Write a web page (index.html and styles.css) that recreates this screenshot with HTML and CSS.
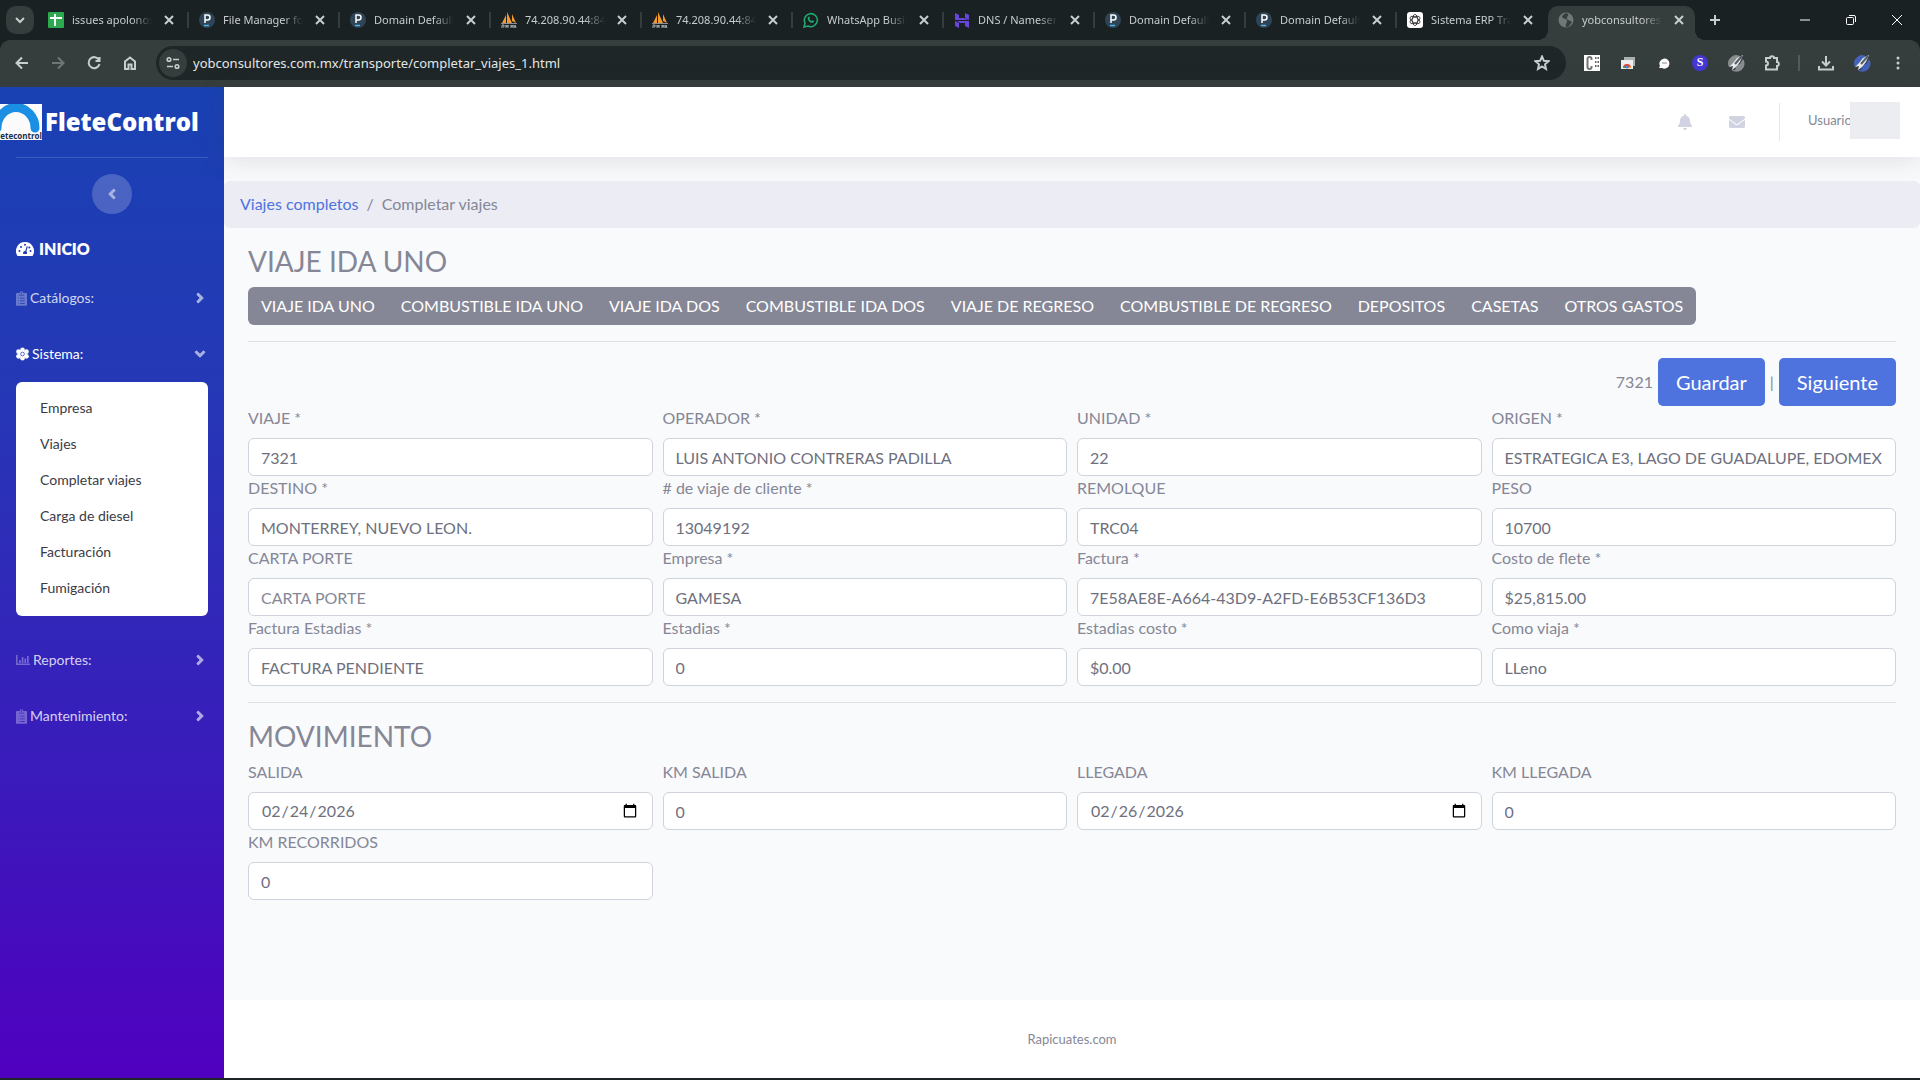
FILE: index.html
```
<!DOCTYPE html>
<html lang="es">

<head>
    <meta charset="UTF-8">
    <meta name="viewport" content="width=device-width, initial-scale=1.0">
    <title>Completar viajes</title>
    <link rel="stylesheet" href="styles.css">
</head>

<body>
    <!-- Shared icons -->
    <svg class="sprite" aria-hidden="true">
        <symbol id="i-close" viewBox="0 0 16 16"><path d="M4 4l8 8M12 4l-8 8" stroke="currentColor" stroke-width="2" fill="none"/></symbol>
        <symbol id="i-plesk" viewBox="0 0 16 16"><circle cx="8" cy="8" r="8" fill="#2f4456"/><path d="M6 11V3h2.500a2.300 2.300 0 0 1 0 5H6" fill="none" stroke="#fff" stroke-width="1.500"/><path d="M5 13.500h5" stroke="#4cb8ee" stroke-width="1.400"/></symbol>
        <symbol id="i-pma" viewBox="0 0 16 16"><path d="M1 11L5 3v8zM6 11V0l5 11zM11 9V2l4 9z" fill="#f29a2e"/><path d="M0 11h16v1H0z" fill="#8d8f94"/><path d="M1 16v-3h2v2H2M5 16v-3l1 2 1-2v3M10 16v-3l1 2 1-2v3M13 16l1-3 1 3" fill="none" stroke="#a9adb3"/></symbol>
        <symbol id="i-angle" viewBox="0 0 256 512"><path fill="currentColor" stroke="currentColor" stroke-width="16" d="M224.3 273l-136 136c-9.400 9.400-24.600 9.400-33.900 0l-22.600-22.600c-9.400-9.400-9.400-24.600 0-33.900l96.400-96.400-96.400-96.400c-9.400-9.400-9.400-24.600 0-33.900L54.300 103c9.400-9.400 24.600-9.400 33.900 0l136 136c9.500 9.400 9.500 24.600.1 34z"/></symbol>
        <symbol id="i-clipboard" viewBox="0 0 12 16"><path fill="currentColor" fill-rule="evenodd" d="M1 2H4a2 2 0 0 1 4 0h3a1 1 0 0 1 1 1v12a1 1 0 0 1-1 1H1a1 1 0 0 1-1-1V3a1 1 0 0 1 1-1zM6 1.200a.8.8 0 1 0 0 1.600.8.8 0 0 0 0-1.600zM3 4v.6h6V4zM2.500 7.200v.7h.7v-.7zm2 0v.7h5v-.7zm-2 3v.7h.7v-.7zm2 0v.7h5v-.7zm-2 3v.7h.7v-.7zm2 0v.7h5v-.7z"/></symbol>
        <symbol id="i-rocket" viewBox="0 0 18 18"><path d="M14 3A8 8 0 0 0 2 13l6-5zM4 15.500A8 8 0 0 0 16 5l-3 5-3 1-2 5z" fill="currentColor" opacity=".75"/><path d="M16 1l-6 3-4 5-4 4 4-1-1 4 4-3 4-5z" fill="#e6eaf0"/><path d="M15 2L8 10" stroke="#555e66" fill="none"/></symbol>
    </svg>

    <!-- Browser bar -->
    <header class="browser">
        <div class="tab-strip">
            <button class="tab-search" aria-label="Buscar pestañas"><svg viewBox="0 0 16 16" width="16" height="16"><path d="M4 6l4 4 4-4" fill="none" stroke="currentColor" stroke-width="2"/></svg></button>
            <div class="tab"><svg class="favicon" viewBox="0 0 16 16"><rect width="16" height="16" rx="1" fill="#2da94f"/><path d="M7 2v12M2 6h12" stroke="#fff" stroke-width="2"/></svg><span class="tab-title">issues apolonos</span><button class="tab-close" aria-label="Cerrar"><svg><use href="#i-close"/></svg></button></div>
            <div class="tab"><svg class="favicon"><use href="#i-plesk"/></svg><span class="tab-title">File Manager for</span><button class="tab-close" aria-label="Cerrar"><svg><use href="#i-close"/></svg></button></div>
            <div class="tab"><svg class="favicon"><use href="#i-plesk"/></svg><span class="tab-title">Domain Default</span><button class="tab-close" aria-label="Cerrar"><svg><use href="#i-close"/></svg></button></div>
            <div class="tab"><svg class="favicon"><use href="#i-pma"/></svg><span class="tab-title">74.208.90.44:844</span><button class="tab-close" aria-label="Cerrar"><svg><use href="#i-close"/></svg></button></div>
            <div class="tab"><svg class="favicon"><use href="#i-pma"/></svg><span class="tab-title">74.208.90.44:844</span><button class="tab-close" aria-label="Cerrar"><svg><use href="#i-close"/></svg></button></div>
            <div class="tab"><svg class="favicon" viewBox="0 0 16 16"><path d="M1 15l1-4a6.500 6.500 0 1 1 3 3z" fill="none" stroke="#1fa870" stroke-width="1.600"/><path d="M5 5c1-1 1.500-.5 2 1l-.6 1c.5 1 1.200 1.600 2.200 2l1-.8c1.500.5 2 1 1 2C8 12.500 3.500 8 5 5z" fill="#1fa870"/></svg><span class="tab-title">WhatsApp Busin</span><button class="tab-close" aria-label="Cerrar"><svg><use href="#i-close"/></svg></button></div>
            <div class="tab"><svg class="favicon" viewBox="0 0 16 16"><path d="M1 1l4 2v3h5l4 2H1zM11 1l4 2v5l-4-2zM15 13V9H3l3 2h5v3l4 2zM1 9l4 2v5l-4-2z" fill="#6747d9"/></svg><span class="tab-title">DNS / Nameserv</span><button class="tab-close" aria-label="Cerrar"><svg><use href="#i-close"/></svg></button></div>
            <div class="tab"><svg class="favicon"><use href="#i-plesk"/></svg><span class="tab-title">Domain Default</span><button class="tab-close" aria-label="Cerrar"><svg><use href="#i-close"/></svg></button></div>
            <div class="tab"><svg class="favicon"><use href="#i-plesk"/></svg><span class="tab-title">Domain Default</span><button class="tab-close" aria-label="Cerrar"><svg><use href="#i-close"/></svg></button></div>
            <div class="tab tab-last"><svg class="favicon" viewBox="0 0 16 16"><rect width="16" height="16" rx="3" fill="#fff"/><g fill="none" stroke="#222" stroke-width=".8"><ellipse cx="8" cy="8" rx="2.800" ry="5.500"/><ellipse cx="8" cy="8" rx="2.800" ry="5.500" transform="rotate(60 8 8)"/><ellipse cx="8" cy="8" rx="2.800" ry="5.500" transform="rotate(120 8 8)"/></g></svg><span class="tab-title">Sistema ERP Tran</span><button class="tab-close" aria-label="Cerrar"><svg><use href="#i-close"/></svg></button></div>
            <div class="tab tab-active"><svg class="favicon" viewBox="0 0 16 16"><circle cx="8" cy="8" r="7.500" fill="#6f7778"/><path d="M8 1c-3 2-5 3-3 5s4 0 4 3-2 3-1 6c4 0 4-3 6-5-2-2-4-1-5-3s2-3 1-5z" fill="#363d3d"/></svg><span class="tab-title">yobconsultores.c</span><button class="tab-close" aria-label="Cerrar"><svg><use href="#i-close"/></svg></button></div>
            <button class="tab-new" aria-label="Nueva pestaña"><svg viewBox="0 0 16 16" width="16" height="16"><path d="M8 3v10M3 8h10" stroke="currentColor" stroke-width="2"/></svg></button>
            <div class="window-buttons">
                <button aria-label="Minimizar"><svg viewBox="0 0 12 12" width="12" height="12"><path d="M1 6h10" stroke="currentColor"/></svg></button>
                <button aria-label="Restaurar"><svg viewBox="0 0 12 12" width="12" height="12" fill="none" stroke="currentColor"><rect x="1.500" y="3.500" width="7" height="7" rx="1"/><path d="M4 1.500h5a1.500 1.500 0 0 1 1.500 1.500v5"/></svg></button>
                <button aria-label="Cerrar ventana"><svg viewBox="0 0 12 12" width="12" height="12"><path d="M1 1l10 10M11 1L1 11" stroke="currentColor"/></svg></button>
            </div>
        </div>
        <div class="toolbar">
            <button class="tool" aria-label="Atrás"><svg viewBox="0 0 16 16"><path d="M14 8H3M8 2.500L2.500 8 8 13.500"/></svg></button>
            <button class="tool tool-off" aria-label="Adelante"><svg viewBox="0 0 16 16"><path d="M2 8h11M8 2.500L13.500 8 8 13.500"/></svg></button>
            <button class="tool" aria-label="Recargar"><svg viewBox="0 0 16 16"><path d="M13 5a5.500 5.500 0 1 0 .5 4M13.500 2v4h-4"/></svg></button>
            <button class="tool" aria-label="Inicio"><svg viewBox="0 0 16 16"><path d="M3 14V6.500L8 2.500l5 4V14H9.500V9.500h-3V14z"/></svg></button>
            <div class="address">
                <button class="site-info" aria-label="Información del sitio"><svg viewBox="0 0 16 16" width="16" height="16" fill="none" stroke="currentColor" stroke-width="1.600"><circle cx="4" cy="4.500" r="1.800"/><path d="M8 4.500h6M2 11.500h6"/><circle cx="12" cy="11.500" r="1.800"/></svg></button>
                <input class="url" type="text" aria-label="Dirección" value="yobconsultores.com.mx/transporte/completar_viajes_1.html">
                <button class="tool" aria-label="Favorito"><svg viewBox="0 0 16 16"><path d="M8 1.500l1.900 4.300 4.600.4-3.500 3.100 1 4.700-4-2.500L4 14l1-4.700L1.500 6.200l4.600-.4z"/></svg></button>
            </div>
            <div class="extensions">
                <button class="tool" aria-label="Extensión C"><svg viewBox="0 0 16 16"><g stroke="none"><rect width="16" height="16" fill="#fff"/><path d="M7.500 5V4a2 2 0 0 0-4 0v8a2 2 0 0 0 4 0v-1" fill="none" stroke="#777" stroke-width="2"/><path d="M11 2h1.500v2H11zm2.500 0H15v2h-1.500zM11 6h1.500v2H11zm2.500 0H15v2h-1.500zM11 10h1.500v2H11zm2.500 0H15v2h-1.500z" fill="#666"/></g></svg></button>
                <button class="tool" aria-label="Capturas"><svg viewBox="0 0 16 16"><g stroke="none"><rect x="4" y="2" width="11" height="9" fill="#aab0b0"/><rect x="1" y="5" width="12" height="9" fill="#eee"/><path d="M3 13a4 4 0 0 1 8 0z" fill="#e34234"/><path d="M3 13l1-2 2 2z" fill="#31a853"/><path d="M11 13l-1-2-2 2z" fill="#fbbc05"/><circle cx="7" cy="12" r="1.500" fill="#4285f4"/></g></svg></button>
                <button class="tool" aria-label="Chat"><svg viewBox="0 0 16 16"><g stroke="none"><path d="M3 13l1-2a5 5 0 1 1 2 2z" fill="#fff"/><path d="M6 7.500h5v1H6z" fill="#888"/></g></svg></button>
                <button class="tool ext-s" aria-label="Extensión S">S</button>
                <button class="tool ext-gray" aria-label="Cohete"><svg><use href="#i-rocket"/></svg></button>
                <button class="tool" aria-label="Extensiones"><svg viewBox="0 0 16 16"><path d="M2 3h4a2 1.800 0 0 1 4 0h3v4a1.800 2 0 0 1 0 4v3.500H2v-4a2 2 0 0 0 0-4z"/></svg></button>
                <span class="tool-line"></span>
                <button class="tool" aria-label="Descargas"><svg viewBox="0 0 16 16"><path d="M8 1v9M4 6.500l4 4 4-4M1 11v3.500h14V11"/></svg></button>
                <button class="tool ext-blue" aria-label="Perfil"><svg><use href="#i-rocket"/></svg></button>
                <button class="tool" aria-label="Menú"><svg viewBox="0 0 16 16"><g stroke="none" fill="currentColor"><circle cx="8" cy="3" r="1.500"/><circle cx="8" cy="8" r="1.500"/><circle cx="8" cy="13" r="1.500"/></g></svg></button>
            </div>
        </div>
    </header>

    <div id="wrapper">
        <!-- Sidebar -->
        <nav class="sidebar">
            <a class="brand" href="#">
                <svg class="brand-logo" viewBox="0 0 42 36"><rect width="42" height="36" fill="#fbfbfb"/><path d="M-3 24a18.500 20 0 0 1 38 0" fill="none" stroke="#1a8fe3" stroke-width="9" stroke-linecap="round"/><text x="42" y="35" text-anchor="end">fletecontrol</text></svg>
                <span>FleteControl</span>
            </a>
            <hr class="sidebar-divider">
            <button class="sidebar-toggle" aria-label="Contraer menú"><svg class="angle angle-left"><use href="#i-angle"/></svg></button>
            <a class="nav-home" href="#">
                <svg viewBox="0 0 18 14" width="18" height="14"><path fill="currentColor" d="M9 0a9 9 0 0 1 7.800 13.500q-.3.500-.9.500H2.100q-.6 0-.9-.5A9 9 0 0 1 9 0z"/><g fill="#1f3db4"><circle cx="3.500" cy="9" r="1"/><circle cx="5" cy="5" r="1"/><circle cx="9" cy="2.800" r="1"/><circle cx="14.500" cy="9" r="1"/><circle cx="13.300" cy="5.500" r="1"/><path d="M10.800 4l1 .4-1.400 4.900a2 2 0 0 1 .3 2.700H7.300a2 2 0 0 1 1.900-3z"/></g></svg>
                <span>INICIO</span>
            </a>
            <a class="nav-item" href="#"><svg class="nav-icon" width="11" height="15"><use href="#i-clipboard"/></svg><span>Catálogos:</span><svg class="angle"><use href="#i-angle"/></svg></a>
            <a class="nav-item nav-open" href="#"><svg class="nav-icon" viewBox="0 0 14 14" width="13" height="14"><g fill="currentColor"><circle cx="7" cy="2.500" r="2.500"/><circle cx="7" cy="11.500" r="2.500"/><circle cx="2.700" cy="4.500" r="2.500"/><circle cx="11.300" cy="4.500" r="2.500"/><circle cx="2.700" cy="9.500" r="2.500"/><circle cx="11.300" cy="9.500" r="2.500"/><circle cx="7" cy="7" r="4"/></g><circle cx="7" cy="7" r="2" fill="none" stroke="#2538b6" stroke-width=".8"/></svg><span>Sistema:</span><svg class="angle angle-down"><use href="#i-angle"/></svg></a>
            <div class="submenu">
                <a href="#">Empresa</a>
                <a href="#">Viajes</a>
                <a href="#">Completar viajes</a>
                <a href="#">Carga de diesel</a>
                <a href="#">Facturación</a>
                <a href="#">Fumigación</a>
            </div>
            <a class="nav-item" href="#"><svg class="nav-icon" viewBox="0 0 14 12" width="14" height="12"><path fill="currentColor" d="M0 1h1.500v8.500H14V11H0zM3 6h1.700v3H3zM5.700 3h1.700v6H5.700zM8.400 4.500h1.700v4.500H8.400zM11 2h1.700v7H11z"/></svg><span>Reportes:</span><svg class="angle"><use href="#i-angle"/></svg></a>
            <a class="nav-item" href="#"><svg class="nav-icon" width="11" height="15"><use href="#i-clipboard"/></svg><span>Mantenimiento:</span><svg class="angle"><use href="#i-angle"/></svg></a>
        </nav>

        <div class="content-wrapper">
            <div class="topbar">
                <button class="topbar-icon" aria-label="Alertas"><svg viewBox="0 0 448 512" width="14" height="16"><path fill="currentColor" d="M224 512c35.320 0 63.970-28.650 63.970-64H160.030c0 35.350 28.650 64 63.970 64zm215.390-149.710c-19.320-20.760-55.470-51.990-55.470-154.290 0-77.700-54.480-139.900-127.940-155.160V32c0-17.670-14.320-32-31.980-32s-31.980 14.330-31.980 32v20.840C118.560 68.100 64.080 130.300 64.080 208c0 102.300-36.150 133.530-55.470 154.290-6 6.450-8.660 14.160-8.610 21.710.11 16.400 12.980 32 32.100 32h383.800c19.120 0 32-15.600 32.100-32 .05-7.550-2.610-15.270-8.610-21.710z"/></svg></button>
                <button class="topbar-icon" aria-label="Mensajes"><svg viewBox="0 0 512 512" width="16" height="16"><path fill="currentColor" d="M502.300 190.800c3.900-3.100 9.700-.2 9.700 4.700V400c0 26.500-21.500 48-48 48H48c-26.500 0-48-21.500-48-48V195.600c0-5 5.700-7.800 9.700-4.700 22.400 17.400 52.100 39.500 154.100 113.600 21.100 15.400 56.700 47.800 92.200 47.600 35.700.3 72-32.800 92.300-47.600 102-74.100 131.600-96.300 154-113.700zM256 320c23.200.4 56.600-29.200 73.400-41.400 132.700-96.300 142.800-104.700 173.400-128.700 5.800-4.500 9.200-11.500 9.200-18.900v-19c0-26.500-21.500-48-48-48H48c-26.500 0-48 21.500-48 48v19c0 7.400 3.400 14.300 9.200 18.900 30.600 23.900 40.700 32.400 173.400 128.700 16.800 12.200 50.200 41.800 73.400 41.400z"/></svg></button>
                <span class="topbar-divider"></span>
                <a class="user" href="#"><span class="user-name">Usuario</span><span class="user-photo"></span></a>
            </div>

            <nav class="breadcrumb" aria-label="breadcrumb">
                <a href="#">Viajes completos</a>
                <span>/</span>
                <span>Completar viajes</span>
            </nav>

            <main class="container">
                <h3>VIAJE IDA UNO</h3>
                <div class="btn-group">
                    <button>VIAJE IDA UNO</button>
                    <button>COMBUSTIBLE IDA UNO</button>
                    <button>VIAJE IDA DOS</button>
                    <button>COMBUSTIBLE IDA DOS</button>
                    <button>VIAJE DE REGRESO</button>
                    <button>COMBUSTIBLE DE REGRESO</button>
                    <button>DEPOSITOS</button>
                    <button>CASETAS</button>
                    <button>OTROS GASTOS</button>
                </div>
                <hr>
                <form>
                    <div class="actions">
                        <span>7321</span>
                        <button class="btn-primary" type="button">Guardar</button>
                        <span>|</span>
                        <button class="btn-primary" type="button">Siguiente</button>
                    </div>
                    <div class="form-grid">
                        <div class="field"><label for="viaje">VIAJE *</label><input id="viaje" type="text" value="7321"></div>
                        <div class="field"><label for="operador">OPERADOR *</label><input id="operador" type="text" value="LUIS ANTONIO CONTRERAS PADILLA"></div>
                        <div class="field"><label for="unidad">UNIDAD *</label><input id="unidad" type="text" value="22"></div>
                        <div class="field"><label for="origen">ORIGEN *</label><input id="origen" type="text" value="ESTRATEGICA E3, LAGO DE GUADALUPE, EDOMEX"></div>
                        <div class="field"><label for="destino">DESTINO *</label><input id="destino" type="text" value="MONTERREY, NUEVO LEON."></div>
                        <div class="field"><label for="viaje_cliente"># de viaje de cliente *</label><input id="viaje_cliente" type="text" value="13049192"></div>
                        <div class="field"><label for="remolque">REMOLQUE</label><input id="remolque" type="text" value="TRC04"></div>
                        <div class="field"><label for="peso">PESO</label><input id="peso" type="text" value="10700"></div>
                        <div class="field"><label for="carta_porte">CARTA PORTE</label><input id="carta_porte" type="text" placeholder="CARTA PORTE"></div>
                        <div class="field"><label for="empresa">Empresa *</label><input id="empresa" type="text" value="GAMESA"></div>
                        <div class="field"><label for="factura">Factura *</label><input id="factura" type="text" value="7E58AE8E-A664-43D9-A2FD-E6B53CF136D3"></div>
                        <div class="field"><label for="costo_flete">Costo de flete *</label><input id="costo_flete" type="text" value="$25,815.00"></div>
                        <div class="field"><label for="factura_estadias">Factura Estadias *</label><input id="factura_estadias" type="text" value="FACTURA PENDIENTE"></div>
                        <div class="field"><label for="estadias">Estadias *</label><input id="estadias" type="text" value="0"></div>
                        <div class="field"><label for="estadias_costo">Estadias costo *</label><input id="estadias_costo" type="text" value="$0.00"></div>
                        <div class="field"><label for="como_viaja">Como viaja *</label><input id="como_viaja" type="text" value="LLeno"></div>
                    </div>
                    <hr>
                    <h3>MOVIMIENTO</h3>
                    <div class="form-grid">
                        <div class="field"><label for="salida">SALIDA</label><input id="salida" type="date" value="2026-02-24"></div>
                        <div class="field"><label for="km_salida">KM SALIDA</label><input id="km_salida" type="text" value="0"></div>
                        <div class="field"><label for="llegada">LLEGADA</label><input id="llegada" type="date" value="2026-02-26"></div>
                        <div class="field"><label for="km_llegada">KM LLEGADA</label><input id="km_llegada" type="text" value="0"></div>
                        <div class="field"><label for="km_recorridos">KM RECORRIDOS</label><input id="km_recorridos" type="text" value="0"></div>
                    </div>
                </form>
            </main>

            <footer>Rapicuates.com</footer>
        </div>
    </div>
</body>

</html>
```
FILE: styles.css
```
* {
    box-sizing: border-box;
}

body {
    margin: 0;
    min-height: 100vh;
    display: flex;
    flex-direction: column;
    font-family: Lato, sans-serif;
    font-size: 16px;
    line-height: 24px;
    color: #858796;
    background: #f9fafc;
    border-bottom: 2px solid #1f2526;
}

button,
input {
    font: inherit;
}

button {
    border: none;
    padding: 0;
    background: none;
    color: inherit;
    cursor: pointer;
}

a {
    text-decoration: none;
}

svg {
    flex: none;
}

.sprite {
    display: none;
}

/* Browser bar */
.browser {
    font-family: "Noto Sans", sans-serif;
    color: #c8cdcd;
    background: #192123;
}

.tab-strip {
    display: flex;
    align-items: flex-start;
    height: 40px;
    padding: 6px 0 0 6px;
}

.tab-search {
    display: flex;
    align-items: center;
    justify-content: center;
    width: 28px;
    height: 28px;
    margin-right: 4px;
    border-radius: 10px;
    background: #363d3d;
}

.tab {
    position: relative;
    display: flex;
    align-items: center;
    flex: 0 1 151px;
    min-width: 0;
    height: 34px;
    padding: 0 12px 6px 10px;
}

/* Line between tabs */
.tab::after {
    content: "";
    position: absolute;
    right: 0;
    top: 6px;
    width: 2px;
    height: 16px;
    background: #363d3d;
}

.tab-last::after {
    display: none;
}

.favicon {
    width: 16px;
    height: 16px;
}

.tab-title {
    flex: 1;
    min-width: 0;
    margin: 0 9px 0 8px;
    overflow: hidden;
    white-space: nowrap;
    font-size: 11px;
    line-height: 16px;
    mask-image: linear-gradient(to right, #000 75%, transparent);
}

.tab-close,
.tab-close svg {
    display: block;
    width: 16px;
    height: 16px;
}

.tab-active {
    flex-basis: 147px;
    padding-right: 8px;
    margin-right: 6px;
    border-radius: 10px 10px 0 0;
    background: #363d3d;
}

/* Rounded feet of the active tab */
.tab-active::before,
.tab-active::after {
    content: "";
    position: absolute;
    top: auto;
    bottom: 0;
    width: 10px;
    height: 10px;
}

.tab-active::before {
    left: -10px;
    background: radial-gradient(circle at 0 0, transparent 10px, #363d3d 10px);
}

.tab-active::after {
    right: -10px;
    background: radial-gradient(circle at 100% 0, transparent 10px, #363d3d 10px);
}

.tab-new {
    display: flex;
    align-items: center;
    justify-content: center;
    width: 28px;
    height: 28px;
}

.window-buttons {
    display: flex;
    margin-left: auto;
    color: #fff;
}

.window-buttons button {
    display: flex;
    align-items: center;
    justify-content: center;
    width: 46px;
    height: 28px;
}

.toolbar {
    display: flex;
    align-items: center;
    height: 47px;
    padding: 0 4px 2px;
    border-radius: 10px 10px 0 0;
    background: #363d3d;
}

.tool {
    display: flex;
    align-items: center;
    justify-content: center;
    flex: none;
    width: 36px;
    height: 34px;
}

.tool svg {
    width: 16px;
    height: 16px;
    fill: none;
    stroke: currentColor;
    stroke-width: 2;
}

.tool-off {
    opacity: 0.4;
}

.address {
    display: flex;
    align-items: center;
    flex: 1;
    height: 34px;
    margin: 0 8px;
    padding: 0 6px 0 3px;
    border-radius: 17px;
    background: #1e2628;
}

.site-info {
    display: flex;
    align-items: center;
    justify-content: center;
    width: 28px;
    height: 28px;
    border-radius: 50%;
    background: #363d3d;
}

.url {
    flex: 1;
    margin-left: 6px;
    padding: 0;
    border: none;
    font-size: 13px;
    color: #e3e7e7;
    background: none;
}

.extensions {
    display: flex;
    align-items: center;
}

.ext-s {
    width: 16px;
    height: 16px;
    margin: 0 10px;
    border-radius: 50%;
    font: bold 12px "Liberation Serif", serif;
    color: #fff;
    background: #4338d6;
}

.tool.ext-gray svg,
.tool.ext-blue svg {
    width: 18px;
    height: 18px;
    stroke: none;
}

.ext-gray {
    color: #a4a9aa;
}

.ext-blue {
    color: #4a6fe0;
}

.tool-line {
    width: 2px;
    height: 16px;
    margin: 0 8px;
    background: #535b5c;
}

#wrapper {
    flex: 1;
    display: flex;
}

/* Sidebar */
.sidebar {
    flex: 0 0 224px;
    display: flex;
    flex-direction: column;
    color: #fff;
    font-size: 14px;
    background: linear-gradient(to bottom, #1941b3, #2538b6 30%, #3a1abb 70%, #5000bf);
}

.brand {
    display: flex;
    align-items: center;
    gap: 3px;
    height: 70px;
    font-family: "Open Sans", sans-serif;
    font-size: 24px;
    font-weight: 800;
    color: #fff;
}

.brand-logo {
    width: 42px;
    height: 36px;
}

.brand-logo text {
    font: bold 8px "Open Sans", sans-serif;
    fill: #1c2b4a;
}

.sidebar-divider {
    width: 192px;
    margin: 0 16px 16px;
    border-top-color: rgba(255, 255, 255, 0.15);
}

.sidebar-toggle {
    display: flex;
    align-items: center;
    justify-content: center;
    align-self: center;
    width: 40px;
    height: 40px;
    color: rgba(255, 255, 255, 0.5);
    border-radius: 50%;
    background: rgba(255, 255, 255, 0.2);
}

.nav-home {
    display: flex;
    align-items: center;
    gap: 5px;
    height: 56px;
    margin: 7px 0 -7px;
    padding: 0 16px;
    font-size: 16px;
    font-weight: 800;
    color: #fff;
}

.nav-item {
    display: flex;
    align-items: center;
    gap: 3px;
    height: 56px;
    padding: 0 20px 0 16px;
    color: rgba(255, 255, 255, 0.8);
}

.nav-icon {
    opacity: 0.4;
}

.nav-open {
    color: #fff;
}

.nav-open .nav-icon {
    opacity: 1;
}

.angle {
    width: 8px;
    height: 16px;
}

.nav-item .angle {
    margin-left: auto;
    color: rgba(255, 255, 255, 0.6);
}

.angle-left {
    transform: rotate(180deg);
}

.angle-down {
    transform: rotate(90deg);
}

.submenu {
    display: flex;
    flex-direction: column;
    margin: 0 16px 16px;
    padding: 8px 8px 10px;
    border-radius: 6px;
    background: #fff;
}

.submenu a {
    padding: 8px 16px;
    line-height: 20px;
    color: #3a3b45;
}

/* Content */
.content-wrapper {
    flex: 1;
    min-width: 0;
    display: flex;
    flex-direction: column;
}

.topbar {
    display: flex;
    align-items: center;
    justify-content: flex-end;
    height: 70px;
    margin-bottom: 24px;
    padding: 0 20px 0 16px;
    background: #fff;
    box-shadow: 0 2px 28px rgba(58, 59, 69, 0.15);
}

.topbar-icon {
    display: flex;
    align-items: center;
    justify-content: center;
    width: 52px;
    height: 70px;
    color: #d1d3e2;
}

.topbar-divider {
    width: 1px;
    height: 38px;
    margin: 0 28px 0 16px;
    background: #e3e6f0;
}

.user {
    display: flex;
    align-items: center;
    padding-bottom: 4px;
    font-size: 13px;
    color: #858796;
}

.user-name {
    width: 42px;
    overflow: hidden;
}

.user-photo {
    width: 50px;
    height: 37px;
    background: #ecedf1;
}

.breadcrumb {
    display: flex;
    gap: 8px;
    margin-bottom: 16px;
    padding: 11px 16px 12px;
    border-radius: 6px;
    background: #ebecf4;
}

.breadcrumb a {
    color: #4e73df;
}

.container {
    flex: 1;
    padding: 0 24px;
}

h3 {
    margin: 0 0 9px;
    font-size: 28px;
    font-weight: 400;
    line-height: 34px;
}

hr {
    width: 100%;
    margin: 16px 0;
    border: 0;
    border-top: 1px solid #dddfe4;
}

form h3 {
    margin-bottom: 7px;
}

.btn-group {
    display: inline-flex;
    vertical-align: top;
    border-radius: 6px;
    background: #858796;
}

.btn-group button {
    height: 38px;
    padding: 0 13px;
    color: #fff;
}

.actions {
    display: flex;
    align-items: center;
    justify-content: flex-end;
    gap: 5px;
}

.btn-primary {
    height: 48px;
    padding: 0 18px;
    border-radius: 5px;
    font-size: 20px;
    color: #fff;
    background: #4e73df;
}

.form-grid {
    display: grid;
    grid-template-columns: repeat(4, 1fr);
    column-gap: 10px;
}

.field {
    min-width: 0;
}

.field label {
    display: block;
    margin-bottom: 8px;
}

.field input {
    display: block;
    width: 100%;
    height: 38px;
    padding: 6px 12px;
    border: 1px solid #d1d3dc;
    border-radius: 6px;
    color: #6e707e;
    background: #fff;
}

.field input::placeholder {
    color: #858796;
}

footer {
    padding: 32px 0;
    font-size: 13px;
    line-height: 14px;
    text-align: center;
    background: #fff;
}
```
